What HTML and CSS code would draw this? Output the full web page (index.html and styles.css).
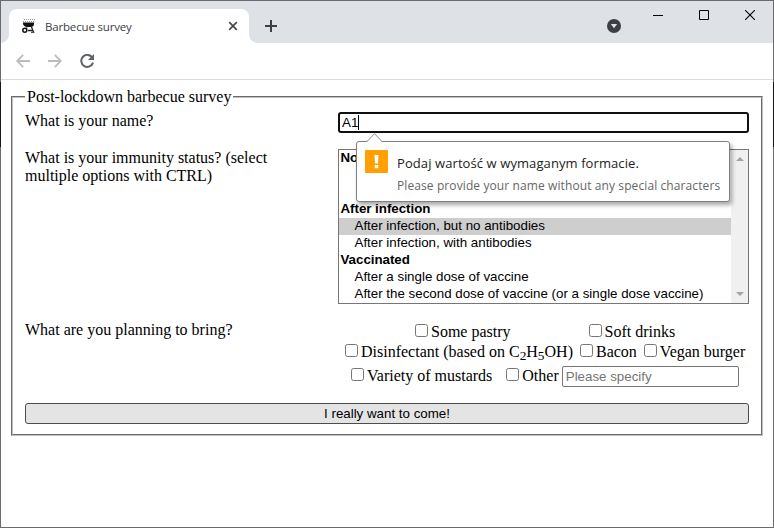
FILE: index.html
```html
<!DOCTYPE html>
<html lang="en">
<head>
<meta charset="utf-8">
<title>Barbecue survey</title>
<link rel="stylesheet" href="styles.css">
</head>
<body>
<div class="window">
  <header class="tabstrip">
    <div class="tab">
      <svg class="favicon" width="14" height="16" viewBox="0 0 14 16"><path d="M2 1.500h11M1 3.500h11" stroke="#999" stroke-width="1" stroke-dasharray="1 1"/><path d="M1 4.500h11v1.500c0 2-1.500 3-3 3h-4c-1.800 0-4-1.500-4-3z" fill="#111"/><path d="M9.500 9l2 5M5 9.500l-1 2M6 12.500h5" fill="none" stroke="#222" stroke-width="1.300"/><circle cx="2.800" cy="12.300" r="2" fill="#fff" stroke="#111" stroke-width="1.500"/><path d="M9 14.300h3.500" stroke="#222"/></svg>
      <span class="tab-title">Barbecue survey</span>
      <svg class="tab-close" width="10" height="10" viewBox="0 0 10 10"><path d="M1.200 1.200l7.600 7.600M8.800 1.200L1.200 8.800" stroke="#45494d" stroke-width="1.700"/></svg>
    </div>
    <svg class="new-tab" width="12" height="12" viewBox="0 0 12 12"><path d="M6 0v12M0 6h12" stroke="#3c4043" stroke-width="2"/></svg>
    <div class="controls">
      <svg class="search-tabs" width="14" height="14" viewBox="0 0 14 14"><circle cx="7" cy="7" r="7" fill="#3c4043"/><path d="M3.800 5h6.400L7 9.300z" fill="#dee1e6"/></svg>
      <svg class="minimize" width="10" height="10" viewBox="0 0 10 10"><path d="M0 5.500h10" stroke="#000"/></svg>
      <svg class="maximize" width="10" height="10" viewBox="0 0 10 10"><path d="M.5.500h9v9h-9z" fill="none" stroke="#000"/></svg>
      <svg class="close" width="10" height="10" viewBox="0 0 10 10"><path d="M0 0l10 10M10 0L0 10" stroke="#000" stroke-width="1.100"/></svg>
    </div>
  </header>
  <nav class="toolbar">
    <svg width="14" height="14" viewBox="0 0 14 14"><path d="M14 7H1.500M7.200.800L1.200 7l6 6.200" fill="none" stroke="#babcbe" stroke-width="1.800"/></svg>
    <svg width="14" height="14" viewBox="0 0 14 14"><path d="M0 7h12.500M6.800.800l6 6.200-6 6.200" fill="none" stroke="#babcbe" stroke-width="1.800"/></svg>
    <svg width="15" height="14" viewBox="0 0 15 14"><path d="M12.300 3.600A6 6 0 1 0 13 8.600" fill="none" stroke="#5f6368" stroke-width="2"/><path d="M14 0v6H8z" fill="#5f6368"/></svg>
  </nav>
  <main class="page">
    <fieldset class="survey">
      <legend>Post-lockdown barbecue survey</legend>
      <div class="question name-row">
        <label>What is your name?</label>
        <div class="name-input">A1<span class="caret"></span>
          <div class="tooltip">
            <svg class="tip-arrow" width="17" height="9" viewBox="0 0 17 9"><path d="M.5 9l8-8.300 8 8.300" fill="#fff" stroke="#8a8a8a"/></svg>
            <svg class="warning" width="23" height="23" viewBox="0 0 23 23"><rect width="23" height="23" rx="1" fill="#ffa000"/><path d="M9.500 5h4l-.5 8.500h-3zM9.700 15h3.600v3.200H9.700z" fill="#fff"/></svg>
            <div class="tip-text"><p class="tip-main">Podaj wartość w wymaganym formacie.</p><p class="tip-detail">Please provide your name without any special characters</p></div>
          </div>
        </div>
      </div>
      <div class="question status-row">
        <label>What is your immunity status? (select multiple options with CTRL)</label>
        <div class="listbox">
          <div class="options">
            <div class="group">No</div>
            <div class="option"></div>
            <div class="option"></div>
            <div class="group">After infection</div>
            <div class="option selected">After infection, but no antibodies</div>
            <div class="option">After infection, with antibodies</div>
            <div class="group">Vaccinated</div>
            <div class="option">After a single dose of vaccine</div>
            <div class="option">After the second dose of vaccine (or a single dose vaccine)</div>
          </div>
          <div class="scrollbar">
            <svg width="8" height="4" viewBox="0 0 8 4"><path d="M0 4l4-4 4 4z" fill="#a3a3a3"/></svg>
            <svg width="8" height="4" viewBox="0 0 8 4"><path d="M0 0h8L4 4z" fill="#a3a3a3"/></svg>
          </div>
        </div>
      </div>
      <div class="question bring-row">
        <label>What are you planning to bring?</label>
        <div class="choices">
          <div class="line first"><label class="choice"><input type="checkbox">Some pastry</label><label class="choice"><input type="checkbox">Soft drinks</label></div>
          <div class="line second"><label class="choice"><input type="checkbox">Disinfectant (based on C<sub>2</sub>H<sub>5</sub>OH)</label><label class="choice"><input type="checkbox">Bacon</label><label class="choice"><input type="checkbox">Vegan burger</label></div>
          <div class="line third"><label class="choice"><input type="checkbox">Variety of mustards</label><label class="choice"><input type="checkbox">Other</label><input class="other" type="text" placeholder="Please specify"></div>
        </div>
      </div>
      <button class="submit" type="button">I really want to come!</button>
    </fieldset>
  </main>
</div>
</body>
</html>
```
FILE: styles.css
```css
* { box-sizing: border-box; }
body { margin: 0; overflow: hidden; background: #fff; }
svg { display: block; flex: none; }
.window {
  position: relative;
  height: 528px;
  border: 1px solid #6b6b6f;
  font: 16px/18px "Liberation Serif", serif;
  color: #000;
}
/* dark backdrop showing through the translucent window frame */
.window::before, .window::after {
  content: "";
  position: absolute;
  top: 81px;
  width: 1px;
  height: 65px;
  background: #17171b;
}
.window::before { left: -1px; }
.window::after { right: -1px; }
.tabstrip {
  height: 42px;
  display: flex;
  align-items: flex-start;
  background: #dee1e6;
  padding-left: 8px;
}
.tab {
  position: relative;
  width: 240px;
  height: 34px;
  margin-top: 8px;
  padding: 0 11px 0 13px;
  display: flex;
  align-items: center;
  background: #fff;
  border-radius: 8px 8px 0 0;
}
.tab::before, .tab::after {
  content: "";
  position: absolute;
  bottom: 0;
  width: 8px;
  height: 8px;
}
.tab::before { left: -8px; background: radial-gradient(circle at 0 0, transparent 7.5px, #fff 8px); }
.tab::after { right: -8px; background: radial-gradient(circle at 100% 0, transparent 7.5px, #fff 8px); }
.tab-title {
  margin-left: 9px;
  font: 11.5px "Open Sans", sans-serif;
  letter-spacing: -0.17px;
  color: #3c4043;
}
.tab-close { margin-left: auto; }
.new-tab { margin: 19px 0 0 16px; }
.controls { display: flex; margin-left: auto; padding-right: 18px; }
.search-tabs { margin: 18px 32px 0 0; }
.minimize, .maximize { margin: 9px 36px 0 0; }
.close { margin-top: 9px; }
.toolbar {
  height: 37px;
  display: flex;
  align-items: center;
  gap: 18px;
  padding-left: 15px;
  border-bottom: 1px solid #dadce0;
}
.page { padding: 8px; }
.survey {
  height: 348px;
  margin: 0 2px;
  padding: 6px 12px 10px;
  border: 2px groove #c0c0c0;
}
.survey legend { padding: 0 2px; }
.question { display: grid; grid-template-columns: 313px 411px; }
.question > label { padding-right: 48px; }
.name-row { height: 37px; }
.status-row { height: 172px; }
.bring-row { height: 82px; }
.name-input {
  position: relative;
  height: 21px;
  display: flex;
  align-items: center;
  padding-left: 2px;
  border: 2px solid #101010;
  border-radius: 3px;
  font: 13.333px "Liberation Sans", sans-serif;
}
.caret { width: 1px; height: 15px; background: #000; }
.tooltip {
  position: absolute;
  z-index: 1;
  left: 16px;
  top: 27px;
  width: 374px;
  height: 61px;
  display: flex;
  padding: 8px;
  background: #fff;
  border: 1px solid #808080;
  border-radius: 3px;
  box-shadow: 2px 3px 4px rgba(0, 0, 0, .35);
}
.tip-arrow { position: absolute; left: 9px; top: -9px; }
.tip-text { margin: 1px 0 0 9px; white-space: nowrap; font-family: "Open Sans", sans-serif; }
.tip-text p { margin: 0; }
.tip-main { font-size: 13px; line-height: 24px; letter-spacing: 0.09px; color: #222; }
.tip-detail { font-size: 12px; line-height: 22px; letter-spacing: 0.1px; color: #666; }
.listbox {
  height: 155px;
  display: flex;
  border: 1px solid #767676;
  font: 13.333px/15px "Liberation Sans", sans-serif;
}
.options { flex: 1; }
.group, .option { height: 17px; white-space: nowrap; }
.group { padding-left: 1.5px; font-weight: bold; letter-spacing: -0.03px; }
.option { padding-left: 15.5px; }
.selected { background: #cecece; }
.scrollbar {
  width: 17px;
  display: flex;
  flex-direction: column;
  align-items: center;
  justify-content: space-between;
  padding: 7px 0;
  background: #f0f0f0;
}
.line { display: flex; align-items: flex-start; }
.first { height: 20px; padding-left: 73px; gap: 74px; }
.second { height: 24px; padding-left: 3px; gap: 3px; }
.third { padding-left: 9px; gap: 10px; }
.choice { display: block; margin-top: 2px; white-space: nowrap; }
.choice input { margin: 1px 3px 0 4px; vertical-align: top; }
.choice sub { position: relative; top: -1px; line-height: 0; font-size: 13.333px; }
.other {
  width: 177px;
  height: 21px;
  margin: 1px 0 0 -7px;
  padding: 1px 3px;
  border: 1px solid #767676;
  border-radius: 2px;
  font: 13.333px "Liberation Sans", sans-serif;
}
.other::placeholder { color: #757575; }
.submit {
  display: block;
  width: 100%;
  height: 21px;
  padding: 0;
  background: #e4e4e4;
  border: 1px solid #4d4d4d;
  border-radius: 3px;
  font: 13.333px "Liberation Sans", sans-serif;
  color: #000;
}
```
